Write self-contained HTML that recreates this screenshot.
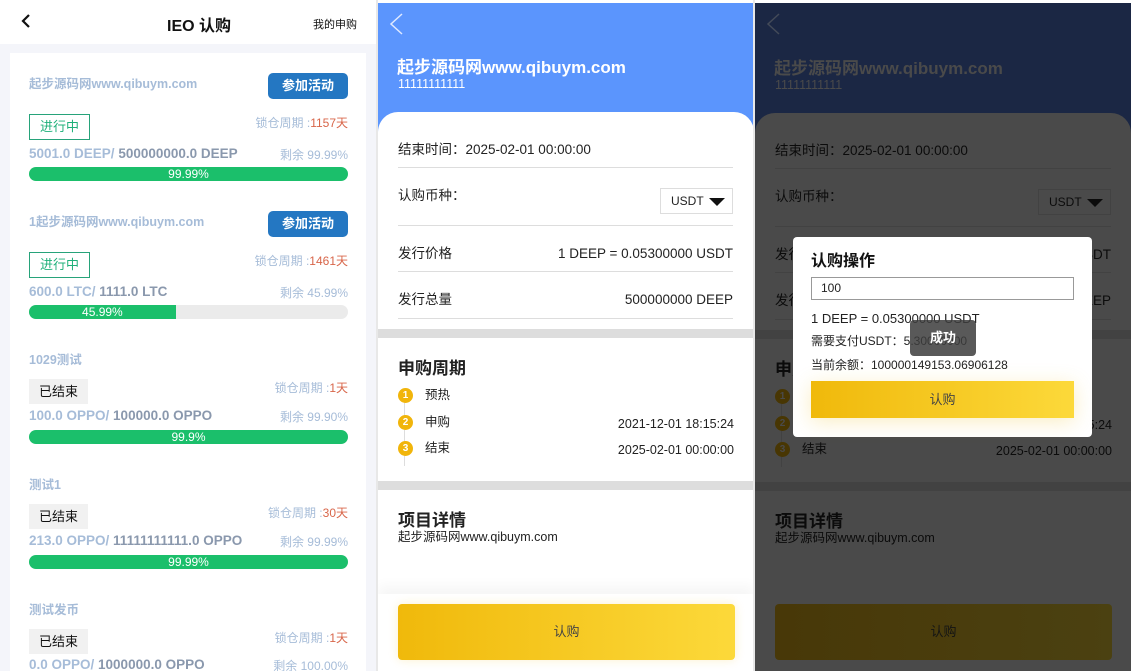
<!DOCTYPE html>
<html><head><meta charset="utf-8"><style>
*{margin:0;padding:0;box-sizing:border-box}
body{width:1131px;height:671px;overflow:hidden;background:#fff;font-family:"Liberation Sans","Noto Sans CJK SC",sans-serif;position:relative;color:#222}
.a{position:absolute;white-space:nowrap}
.L{position:absolute;left:0;top:0;width:376px;height:671px;background:#f4f5fa;overflow:hidden}
.P{position:absolute;top:0;width:376px;height:671px;background:#fff;overflow:hidden}
.card{position:absolute;left:10px;top:53px;width:356px;height:618px;background:#fff}
.t{font-size:12.5px;font-weight:bold;color:#a6bcd8}
.btn{background:#2477c2;color:#fff;font-size:13px;font-weight:bold;border-radius:5px;width:80px;height:26px;line-height:26px;text-align:center}
.on{border:1px solid #27a37a;color:#1fb07a;font-size:13px;width:61px;height:26px;line-height:24px;text-align:center}
.off{background:#f1f1f1;color:#111;font-size:13px;width:59px;height:25px;line-height:25px;text-align:center}
.lk{font-size:12px;color:#a6bcd8;text-align:right;right:28px}
.lk b{font-weight:normal;color:#d8664a}
.amt{font-size:13.5px;font-weight:bold;color:#a6bcd8}
.amt b{color:#8a98ad}
.rem{font-size:12px;color:#a6bcd8;right:28px}
.bar{left:29px;width:319px;height:14px;border-radius:7px;background:#ebebeb;overflow:hidden}
.bar div{height:14px;background:#1bbf6b;color:#fff;font-size:12px;line-height:14px;text-align:center}
.row{position:absolute;left:20px;right:20px;border-bottom:1px solid #ddd;font-size:13.5px;line-height:18px;display:flex;justify-content:space-between}
.num{display:inline-block;width:15px;height:15px;border-radius:8px;background:#f1b50b;color:#fff;font-size:10px;line-height:15px;text-align:center;font-weight:bold;vertical-align:middle}
.s{font-size:12.5px;line-height:16px}
.D{color:#0b0b0b}
.D .row{border-bottom-color:#424242}
.D .num{background:#483603;color:#4a4a4a}
</style></head><body>

<div class="L">
  <div class="a" style="left:0;top:0;width:376px;height:44px;background:#fff"></div>
  <svg class="a" style="left:20px;top:13px" width="12" height="16"><path d="M9 2 L3 8 L9 14" stroke="#111" stroke-width="2.2" fill="none"/></svg>
  <div class="a" style="left:167px;top:12px;font-size:16px;font-weight:bold;color:#111">IEO 认购</div>
  <div class="a" style="left:313px;top:16px;font-size:11px;color:#111">我的申购</div>
  <div class="card"></div>

  <div class="a t" style="left:29px;top:73px">起步源码网www.qibuym.com</div>
  <div class="a btn" style="left:268px;top:73px">参加活动</div>
  <div class="a on" style="left:29px;top:114px">进行中</div>
  <div class="a lk" style="top:114px">锁仓周期 :<b>1157天</b></div>
  <div class="a amt" style="left:29px;top:146px">5001.0 DEEP/ <b>500000000.0 DEEP</b></div>
  <div class="a rem" style="top:146px">剩余 99.99%</div>
  <div class="a bar" style="top:167px"><div style="width:100%">99.99%</div></div>

  <div class="a t" style="left:29px;top:211px">1起步源码网www.qibuym.com</div>
  <div class="a btn" style="left:268px;top:211px">参加活动</div>
  <div class="a on" style="left:29px;top:252px">进行中</div>
  <div class="a lk" style="top:252px">锁仓周期 :<b>1461天</b></div>
  <div class="a amt" style="left:29px;top:284px">600.0 LTC/ <b>1111.0 LTC</b></div>
  <div class="a rem" style="top:284px">剩余 45.99%</div>
  <div class="a bar" style="top:305px"><div style="width:46%">45.99%</div></div>

  <div class="a t" style="left:29px;top:349px">1029测试</div>
  <div class="a off" style="left:29px;top:379px">已结束</div>
  <div class="a lk" style="top:379px">锁仓周期 :<b>1天</b></div>
  <div class="a amt" style="left:29px;top:408px">100.0 OPPO/ <b>100000.0 OPPO</b></div>
  <div class="a rem" style="top:408px">剩余 99.90%</div>
  <div class="a bar" style="top:430px"><div style="width:100%">99.9%</div></div>

  <div class="a t" style="left:29px;top:474px">测试1</div>
  <div class="a off" style="left:29px;top:504px">已结束</div>
  <div class="a lk" style="top:504px">锁仓周期 :<b>30天</b></div>
  <div class="a amt" style="left:29px;top:533px">213.0 OPPO/ <b>11111111111.0 OPPO</b></div>
  <div class="a rem" style="top:533px">剩余 99.99%</div>
  <div class="a bar" style="top:555px"><div style="width:100%">99.99%</div></div>

  <div class="a t" style="left:29px;top:599px">测试发币</div>
  <div class="a off" style="left:29px;top:629px">已结束</div>
  <div class="a lk" style="top:629px">锁仓周期 :<b>1天</b></div>
  <div class="a amt" style="left:29px;top:657px">0.0 OPPO/ <b>1000000.0 OPPO</b></div>
  <div class="a rem" style="top:657px">剩余 100.00%</div>
</div>

<!-- middle -->
<div class="P" style="left:378px;width:375px">
  <div class="a" style="left:0;top:3px;width:376px;height:130px;background:#5b95fd"></div>
  <svg class="a" style="left:10px;top:12px" width="16" height="24"><path d="M14 2 L3 12 L14 22" stroke="#dfe9ff" stroke-width="1.5" fill="none"/></svg>
  <div class="a" style="left:19px;top:53px;font-size:17px;font-weight:bold;color:#fff">起步源码网www.qibuym.com</div>
  <div class="a" style="left:20px;top:77px;font-size:12.5px;color:#fff">11111111111</div>
  <div class="a" style="left:0;top:112px;width:376px;height:559px;background:#fff;border-radius:20px 20px 0 0"></div>
  <div class="row" style="top:141px;height:27px"><span>结束时间：2025-02-01 00:00:00</span></div>
  <div class="row" style="top:187px;height:39px"><span>认购币种：</span>
    <div class="a" style="right:0;top:1px;width:73px;height:26px;border:1px solid #ddd;font-size:12px;line-height:24px;padding-left:10px">USDT<svg class="a" style="right:7px;top:9px" width="16" height="8"><path d="M0 0H16L8 8Z" fill="#111"/></svg></div></div>
  <div class="row" style="top:245px;height:27px"><span>发行价格</span><span>1 DEEP = 0.05300000 USDT</span></div>
  <div class="row" style="top:291px;height:28px"><span>发行总量</span><span>500000000 DEEP</span></div>
  <div class="a" style="left:0;top:329px;width:376px;height:9px;background:#ddd"></div>
  <div class="a" style="left:20px;top:354px;font-size:17px;font-weight:bold">申购周期</div>
  <div class="a" style="left:26px;top:400px;width:1px;height:66px;background:#ddd"></div>
  <div class="a s" style="left:20px;top:387px"><span class="num">1</span><span style="margin-left:12px">预热</span></div>
  <div class="a s" style="left:20px;top:414px"><span class="num">2</span><span style="margin-left:12px">申购</span></div>
  <div class="a s" style="right:19px;top:416px">2021-12-01 18:15:24</div>
  <div class="a s" style="left:20px;top:440px"><span class="num">3</span><span style="margin-left:12px">结束</span></div>
  <div class="a s" style="right:19px;top:442px">2025-02-01 00:00:00</div>
  <div class="a" style="left:0;top:481px;width:376px;height:9px;background:#ddd"></div>
  <div class="a" style="left:20px;top:506px;font-size:17px;font-weight:bold">项目详情</div>
  <div class="a s" style="left:20px;top:529px">起步源码网www.qibuym.com</div>
  <div class="a" style="left:0;top:594px;width:376px;height:77px;background:#fff;box-shadow:0 -8px 12px rgba(0,0,0,0.04)"></div>
  <div class="a" style="left:20px;top:604px;width:337px;height:56px;border-radius:4px;background:linear-gradient(90deg,#f0b90b,#fcd93a);box-shadow:0 0 10px rgba(240,185,11,0.2);text-align:center;line-height:56px;font-size:13px;color:#444">认购</div>
</div>

<!-- right (pre-darkened) -->
<div class="P D" style="left:755px;background:#4a4a4a">
  <div class="a" style="left:0;top:0;width:376px;height:3px;background:#fff"></div>
  <div class="a" style="left:0;top:3px;width:376px;height:130px;background:#1b2744"></div>
  <svg class="a" style="left:10px;top:12px" width="16" height="24"><path d="M14 2 L3 12 L14 22" stroke="#434a58" stroke-width="1.5" fill="none"/></svg>
  <div class="a" style="left:19px;top:54px;font-size:17px;font-weight:bold;color:#4a4a4a">起步源码网www.qibuym.com</div>
  <div class="a" style="left:20px;top:78px;font-size:12.5px;color:#4a4a4a">11111111111</div>
  <div class="a" style="left:0;top:113px;width:376px;height:558px;background:#4a4a4a;border-radius:20px 20px 0 0"></div>
  <div class="row" style="top:142px;height:27px"><span>结束时间：2025-02-01 00:00:00</span></div>
  <div class="row" style="top:188px;height:39px"><span>认购币种：</span>
    <div class="a" style="right:0;top:1px;width:73px;height:26px;border:1px solid #424242;font-size:12px;line-height:24px;padding-left:10px">USDT<svg class="a" style="right:7px;top:9px" width="16" height="8"><path d="M0 0H16L8 8Z" fill="#0b0b0b"/></svg></div></div>
  <div class="row" style="top:246px;height:27px"><span>发行价格</span><span>1 DEEP = 0.05300000 USDT</span></div>
  <div class="row" style="top:292px;height:28px"><span>发行总量</span><span>500000000 DEEP</span></div>
  <div class="a" style="left:0;top:330px;width:376px;height:9px;background:#424242"></div>
  <div class="a" style="left:20px;top:355px;font-size:17px;font-weight:bold">申购周期</div>
  <div class="a" style="left:26px;top:401px;width:1px;height:66px;background:#424242"></div>
  <div class="a s" style="left:20px;top:388px"><span class="num">1</span><span style="margin-left:12px">预热</span></div>
  <div class="a s" style="left:20px;top:415px"><span class="num">2</span><span style="margin-left:12px">申购</span></div>
  <div class="a s" style="right:19px;top:417px">2021-12-01 18:15:24</div>
  <div class="a s" style="left:20px;top:441px"><span class="num">3</span><span style="margin-left:12px">结束</span></div>
  <div class="a s" style="right:19px;top:443px">2025-02-01 00:00:00</div>
  <div class="a" style="left:0;top:482px;width:376px;height:9px;background:#424242"></div>
  <div class="a" style="left:20px;top:507px;font-size:17px;font-weight:bold">项目详情</div>
  <div class="a s" style="left:20px;top:530px">起步源码网www.qibuym.com</div>
  <div class="a" style="left:20px;top:604px;width:337px;height:56px;border-radius:4px;background:linear-gradient(90deg,#483808,#4b4111);text-align:center;line-height:56px;font-size:13px;color:#141414">认购</div>

  <div class="a" style="left:38px;top:237px;width:299px;height:200px;background:#fff;border-radius:4px"></div>
  <div class="a" style="left:56px;top:247px;font-size:16px;font-weight:bold;color:#111">认购操作</div>
  <div class="a" style="left:56px;top:277px;width:263px;height:23px;border:1px solid #999;font-size:12px;line-height:21px;padding-left:9px;background:#fff;color:#222">100</div>
  <div class="a" style="left:56px;top:311px;font-size:13px;color:#222">1 DEEP = 0.05300000 USDT</div>
  <div class="a" style="left:56px;top:332px;font-size:12px;color:#222">需要支付USDT：5.30000000</div>
  <div class="a" style="left:56px;top:356px;font-size:12px;color:#222">当前余额：100000149153.06906128</div>
  <div class="a" style="left:56px;top:381px;width:263px;height:37px;background:linear-gradient(90deg,#f0b90b,#fcd93a);box-shadow:0 4px 20px rgba(240,200,60,0.3);text-align:center;line-height:37px;font-size:13px;color:#444">认购</div>
  <div class="a" style="left:155px;top:320px;width:66px;height:36px;border-radius:4px;background:rgba(60,60,60,0.85);color:#fff;font-size:13px;font-weight:bold;text-align:center;line-height:36px">成功</div>
</div>
<div class="a" style="left:376px;top:0;width:2px;height:671px;background:#e8e8e8"></div>
<div class="a" style="left:753px;top:0;width:2px;height:671px;background:#e8e8e8"></div>
</body></html>
